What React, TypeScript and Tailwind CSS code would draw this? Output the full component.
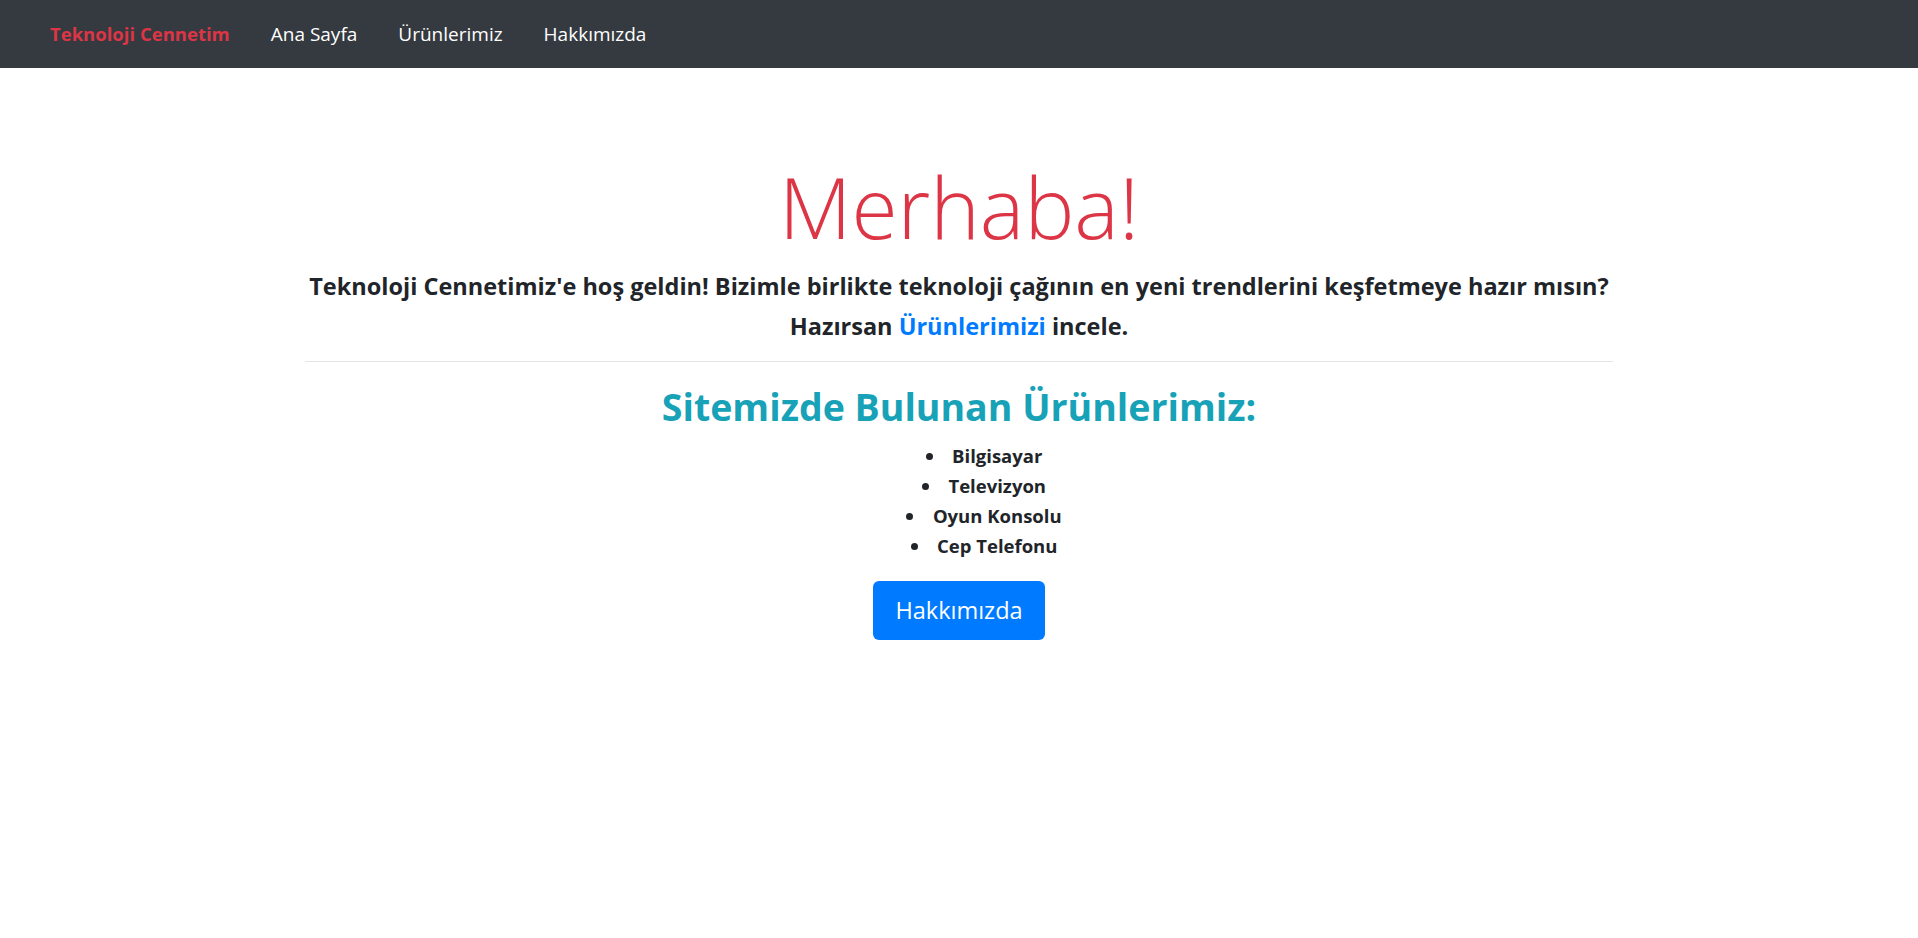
import React from "react";

const products = ["Bilgisayar", "Televizyon", "Oyun Konsolu", "Cep Telefonu"];

const App = () => {
  return (
    <div className="min-h-screen bg-white font-['Open_Sans',sans-serif] text-[#212529]">
      {/* Navbar */}
      <nav className="h-[68px] bg-[#343a40] flex items-center pl-[50px] gap-[41px]">
        <a href="#" className="text-[18.5px] font-bold text-[#dc3545]">
          Teknoloji Cennetim
        </a>
        <a href="#" className="text-[19px] text-white">Ana Sayfa</a>
        <a href="#" className="text-[19px] text-white">Ürünlerimiz</a>
        <a href="#" className="text-[19px] text-white">Hakkımızda</a>
      </nav>

      {/* Content */}
      <div className="w-[1308px] mx-auto text-center pt-[89px]">
        <h1 className="text-[84px] leading-[100px] font-light text-[#dc3545]">Merhaba!</h1>
        <p className="mt-[9px] text-[23.5px] leading-[40px] font-bold">
          <span className="block whitespace-nowrap">
            Teknoloji Cennetimiz'e hoş geldin! Bizimle birlikte teknoloji çağının en yeni trendlerini keşfetmeye hazır mısın?
          </span>
          <span className="block">
            Hazırsan <a href="#" className="text-[#007bff]">Ürünlerimizi</a> incele.
          </span>
        </p>
        <hr className="mt-[15px] border-0 border-t border-[#e5e5e5]" />
        <h2 className="mt-[21px] text-[37.5px] leading-[48px] font-bold text-[#17a2b8]">
          Sitemizde Bulunan Ürünlerimiz:
        </h2>
        <ul className="mt-[10px] pl-[50px] list-disc list-inside text-[18.5px] leading-[30px] font-bold">
          {products.map((p) => (
            <li key={p}>{p}</li>
          ))}
        </ul>
        <button className="mt-[20px] h-[59px] px-[22px] rounded-[6px] bg-[#007bff] text-white text-[23.5px]">
          Hakkımızda
        </button>
      </div>
    </div>
  );
};

export default App;
